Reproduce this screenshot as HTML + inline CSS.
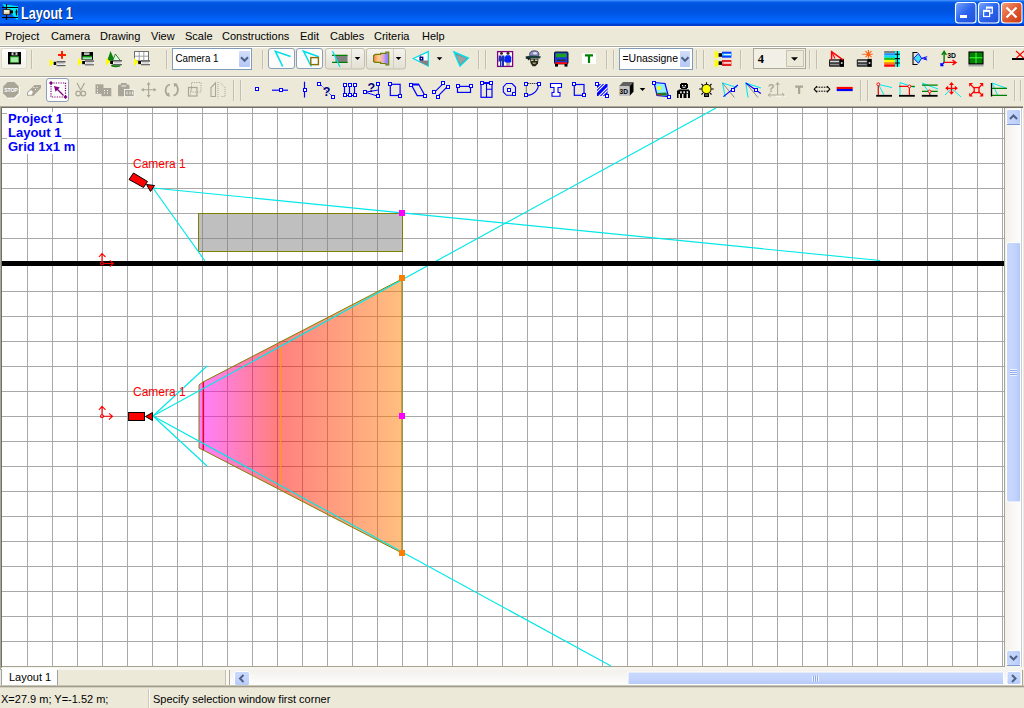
<!DOCTYPE html>
<html><head><meta charset="utf-8">
<style>
*{margin:0;padding:0;box-sizing:border-box}
html,body{width:1024px;height:708px;overflow:hidden}
body{position:relative;background:#ece9d8;font-family:"Liberation Sans",sans-serif;font-size:11px;color:#000}
.a{position:absolute}
svg{position:absolute;overflow:visible}
#title{left:0;top:0;width:1024px;height:26px;background:linear-gradient(to bottom,#4a96ff 0px,#2a7cf8 1px,#0a5fe6 2px,#0058e4 3px,#0052dc 8px,#0054e2 12px,#0060f4 18px,#0066ff 21px,#0062f8 23px,#0044d8 24px,#0033c4 26px)}
#ttext{left:21px;top:4px;font-size:15px;font-weight:bold;color:#fff;white-space:nowrap;text-shadow:1px 1px 0 #0a246a;transform:scale(0.84,1.04);transform-origin:0 0}
.menu{top:30px;font-size:11px;white-space:nowrap}
</style></head>
<body>
<div id="title" class="a"></div>
<div id="ttext" class="a">Layout 1</div>
<svg class="a" style="left:0;top:0" width="1024" height="26" viewBox="0 0 1024 26">
<defs>
<linearGradient id="tbb" x1="0" y1="0" x2="1" y2="1"><stop offset="0" stop-color="#7aa8ff"/><stop offset="0.5" stop-color="#2a64ee"/><stop offset="1" stop-color="#1f4fd8"/></linearGradient>
<linearGradient id="tbc" x1="0" y1="0" x2="1" y2="1"><stop offset="0" stop-color="#f4a080"/><stop offset="0.5" stop-color="#e05a30"/><stop offset="1" stop-color="#c83c18"/></linearGradient>
</defs>
<rect x="955.5" y="2.5" width="20.5" height="20.5" rx="3" fill="url(#tbb)" stroke="#fff" stroke-width="1.1"/>
<rect x="978.5" y="2.5" width="20.5" height="20.5" rx="3" fill="url(#tbb)" stroke="#fff" stroke-width="1.1"/>
<rect x="1001.5" y="2.5" width="20.5" height="20.5" rx="3" fill="url(#tbc)" stroke="#fff" stroke-width="1.1"/>
<rect x="960" y="15" width="7" height="3" fill="#fff"/>
<path d="M986.5 9.5V7.7H992.3V13.2H990" stroke="#fff" stroke-width="1.2" fill="none"/><path d="M986 7.5H992.8" stroke="#fff" stroke-width="2"/>
<rect x="983.6" y="11" width="6" height="5.5" fill="none" stroke="#fff" stroke-width="1.2"/><path d="M983 10.8H990.2" stroke="#fff" stroke-width="2"/>
<path d="M1006.5 7.5L1016.5 17.5M1016.5 7.5L1006.5 17.5" stroke="#fff" stroke-width="2.2"/>
<!-- app icon -->
<polygon points="2.5,4 18,6.2 18,19.5 16.5,19.5 11,13 4.5,7" fill="#00e8f0"/>
<path d="M2 7.5H18M2 17.5H18M6.5 4V20" stroke="#000" stroke-width="1.1"/>
<rect x="3.2" y="9.6" width="6.8" height="4.8" fill="#e8d8b0" stroke="#302010" stroke-width="0.9"/><rect x="4" y="10.6" width="5.2" height="1" fill="#fff"/>
<rect x="10" y="10.3" width="3" height="3.2" fill="#000"/><path d="M16.5 9.5V15.5M15.3 12H17.7" stroke="#000" stroke-width="1.2"/>
</svg>
<div class="a menu" style="left:5px">Project</div>
<div class="a menu" style="left:51px">Camera</div>
<div class="a menu" style="left:100px">Drawing</div>
<div class="a menu" style="left:151px">View</div>
<div class="a menu" style="left:185px">Scale</div>
<div class="a menu" style="left:222px">Constructions</div>
<div class="a menu" style="left:300px">Edit</div>
<div class="a menu" style="left:330px">Cables</div>
<div class="a menu" style="left:374px">Criteria</div>
<div class="a menu" style="left:422px">Help</div>
<div class="a" style="left:0;top:26px;width:1024px;height:1px;background:#fcf0e2"></div>
<div class="a" style="left:0;top:28px;width:1024px;height:1px;background:#f2eae2"></div>
<div class="a" style="left:0;top:45px;width:1024px;height:1px;background:#f8f7f0"></div>
<div class="a" style="left:0;top:46px;width:1024px;height:1px;background:#aca899"></div>
<div class="a" style="left:0;top:47px;width:1024px;height:1px;background:#fff"></div>
<div class="a" style="left:0;top:76px;width:1024px;height:1px;background:#aca899"></div>
<div class="a" style="left:0;top:77px;width:1024px;height:1px;background:#fff"></div>
<svg class="a" style="left:0;top:46px" width="1024" height="60" viewBox="0 46 1024 60">
<path d="M31.5 50V69" stroke="#c2bfb0" shape-rendering="crispEdges"/>
<path d="M32.5 50V69" stroke="#f2f0e6" shape-rendering="crispEdges"/>
<path d="M166.5 50V69" stroke="#c2bfb0" shape-rendering="crispEdges"/>
<path d="M167.5 50V69" stroke="#f2f0e6" shape-rendering="crispEdges"/>
<path d="M262.5 50V69" stroke="#c2bfb0" shape-rendering="crispEdges"/>
<path d="M263.5 50V69" stroke="#f2f0e6" shape-rendering="crispEdges"/>
<path d="M478.5 50V69" stroke="#c2bfb0" shape-rendering="crispEdges"/>
<path d="M479.5 50V69" stroke="#f2f0e6" shape-rendering="crispEdges"/>
<path d="M485.5 50V69" stroke="#c2bfb0" shape-rendering="crispEdges"/>
<path d="M486.5 50V69" stroke="#f2f0e6" shape-rendering="crispEdges"/>
<path d="M606.5 50V69" stroke="#c2bfb0" shape-rendering="crispEdges"/>
<path d="M607.5 50V69" stroke="#f2f0e6" shape-rendering="crispEdges"/>
<path d="M613.5 50V69" stroke="#c2bfb0" shape-rendering="crispEdges"/>
<path d="M614.5 50V69" stroke="#f2f0e6" shape-rendering="crispEdges"/>
<path d="M696.5 50V69" stroke="#c2bfb0" shape-rendering="crispEdges"/>
<path d="M697.5 50V69" stroke="#f2f0e6" shape-rendering="crispEdges"/>
<path d="M703.5 50V69" stroke="#c2bfb0" shape-rendering="crispEdges"/>
<path d="M704.5 50V69" stroke="#f2f0e6" shape-rendering="crispEdges"/>
<path d="M740.5 50V69" stroke="#c2bfb0" shape-rendering="crispEdges"/>
<path d="M741.5 50V69" stroke="#f2f0e6" shape-rendering="crispEdges"/>
<path d="M809.5 50V69" stroke="#c2bfb0" shape-rendering="crispEdges"/>
<path d="M810.5 50V69" stroke="#f2f0e6" shape-rendering="crispEdges"/>
<path d="M816.5 50V69" stroke="#c2bfb0" shape-rendering="crispEdges"/>
<path d="M817.5 50V69" stroke="#f2f0e6" shape-rendering="crispEdges"/>
<path d="M993.5 50V69" stroke="#c2bfb0" shape-rendering="crispEdges"/>
<path d="M994.5 50V69" stroke="#f2f0e6" shape-rendering="crispEdges"/>
<path d="M233.5 80V101" stroke="#c2bfb0" shape-rendering="crispEdges"/>
<path d="M234.5 80V101" stroke="#f2f0e6" shape-rendering="crispEdges"/>
<path d="M240.5 80V101" stroke="#c2bfb0" shape-rendering="crispEdges"/>
<path d="M241.5 80V101" stroke="#f2f0e6" shape-rendering="crispEdges"/>
<path d="M860.5 80V101" stroke="#c2bfb0" shape-rendering="crispEdges"/>
<path d="M861.5 80V101" stroke="#f2f0e6" shape-rendering="crispEdges"/>
<path d="M867.5 80V101" stroke="#c2bfb0" shape-rendering="crispEdges"/>
<path d="M868.5 80V101" stroke="#f2f0e6" shape-rendering="crispEdges"/>
<path d="M1014.5 80V101" stroke="#c2bfb0" shape-rendering="crispEdges"/>
<path d="M1015.5 80V101" stroke="#f2f0e6" shape-rendering="crispEdges"/>
<path d="M1020.5 80V101" stroke="#c2bfb0" shape-rendering="crispEdges"/>
<path d="M1021.5 80V101" stroke="#f2f0e6" shape-rendering="crispEdges"/>
<defs><linearGradient id="rb" x1="0" y1="0" x2="0" y2="1"><stop offset="0" stop-color="#ffffff"/><stop offset="1" stop-color="#f3f2ec"/></linearGradient><linearGradient id="spl" x1="0" y1="0" x2="0" y2="1"><stop offset="0" stop-color="#f4f3ee"/><stop offset="1" stop-color="#e3e0d3"/></linearGradient><linearGradient id="cone2" x1="0" y1="0" x2="1" y2="0"><stop offset="0" stop-color="#ff8060"/><stop offset="0.35" stop-color="#ffd080"/><stop offset="0.65" stop-color="#e0a8d8"/><stop offset="0.85" stop-color="#9888ff"/><stop offset="1" stop-color="#9080ff"/></linearGradient></defs>
<rect x="1.5" y="48.5" width="25" height="20" rx="2" fill="url(#rb)" stroke="#dedbcc"/>
<rect x="268.5" y="48.5" width="26" height="20" rx="2.5" fill="#fcfcfa" stroke="#8d9fb8"/>
<rect x="296.5" y="48.5" width="26" height="20" rx="2.5" fill="#fcfcfa" stroke="#8d9fb8"/>
<rect x="46.5" y="78.5" width="22" height="23" rx="2.5" fill="#fcfcfa" stroke="#8d9fb8"/>
<rect x="325.5" y="48.5" width="39" height="20.5" rx="2.5" fill="url(#spl)" stroke="#c2bfae"/>
<path d="M351.5 49V69" stroke="#d0cdbd" shape-rendering="crispEdges"/>
<rect x="366.5" y="48.5" width="39" height="20.5" rx="2.5" fill="url(#spl)" stroke="#c2bfae"/>
<path d="M393.5 49V69" stroke="#d0cdbd" shape-rendering="crispEdges"/>
<polygon points="354.7,57 360.3,57 357.5,60" fill="#000"/>
<polygon points="395.7,57 401.3,57 398.5,60" fill="#000"/>
<polygon points="436.7,57.2 442.3,57.2 439.5,60.2" fill="#000"/>
<polygon points="639.7,88 645.3,88 642.5,91" fill="#000"/>
<rect x="172.5" y="48.5" width="79" height="21" fill="#fff" stroke="#7f9db9"/>
<defs><linearGradient id="cb172" x1="0" y1="0" x2="0" y2="1"><stop offset="0" stop-color="#d2def9"/><stop offset="1" stop-color="#b4c8f6"/></linearGradient></defs>
<rect x="239" y="51" width="11" height="16" rx="1" fill="url(#cb172)"/>
<path d="M241.0 57.2L244.5 60.8L248.0 57.2" stroke="#4d6185" stroke-width="2" fill="none"/>
<text x="175.5" y="61.5" font-family="Liberation Sans" font-size="11" fill="#000" textLength="43" lengthAdjust="spacingAndGlyphs">Camera 1</text>
<rect x="619.5" y="48.5" width="73" height="21" fill="#fff" stroke="#7f9db9"/>
<defs><linearGradient id="cb619" x1="0" y1="0" x2="0" y2="1"><stop offset="0" stop-color="#d2def9"/><stop offset="1" stop-color="#b4c8f6"/></linearGradient></defs>
<rect x="680" y="51" width="10" height="16" rx="1" fill="url(#cb619)"/>
<path d="M681.5 57.2L685.0 60.8L688.5 57.2" stroke="#4d6185" stroke-width="2" fill="none"/>
<text x="622.5" y="61.8" font-family="Liberation Sans" font-size="11" fill="#000" textLength="55.5" lengthAdjust="spacingAndGlyphs">=Unassigne</text>
<rect x="753.5" y="48.5" width="52" height="20" fill="#f2f0e6" stroke="#aca899"/>
<rect x="786.5" y="50.5" width="17" height="16" fill="#ece9d8" stroke="#c6c3b3"/>
<polygon points="791,57.2 798,57.2 794.5,60.8" fill="#000"/>
<text x="757.8" y="62.8" font-family="Liberation Serif" font-weight="bold" font-size="12.5" fill="#000">4</text>
<rect x="8" y="52" width="13" height="12.3" fill="#000"/>
<rect x="11.5" y="52.3" width="6" height="3" fill="#c8c8c8"/>
<rect x="13.5" y="52.6" width="2" height="2.2" fill="#000"/>
<rect x="10" y="56.3" width="9" height="6.5" fill="#22aa22"/>
<rect x="10.8" y="57.3" width="7.4" height="4.8" fill="#a8e8a8"/>
<polygon points="49.5,58.8 53.8,62.8 49.5,66.8" fill="#ffff00"/>
<rect x="53.7" y="61.8" width="2.8" height="3.2" fill="#000"/>
<rect x="56.5" y="61.199999999999996" width="9" height="5" fill="#f4f4f4"/>
<rect x="56.5" y="61.199999999999996" width="9" height="1.3" fill="#404040"/>
<rect x="56.5" y="65.0" width="9" height="1.2" fill="#606060"/>
<rect x="57.5" y="63.4" width="7" height="0.8" fill="#b0b0b0"/>
<path d="M58 55.1H66M62 51V58.7" stroke="#ff2000" stroke-width="2"/>
<rect x="81.5" y="52" width="11.5" height="7.8" fill="#000"/>
<rect x="84" y="52.4" width="5.5" height="2.6" fill="#b8b8b8"/>
<rect x="82.5" y="55.8" width="9.5" height="1.4" fill="#00a000"/>
<rect x="82.5" y="57.2" width="9.5" height="2.2" fill="#a0e8b0"/>
<polygon points="78,58 82.3,62 78,66" fill="#ffff00"/>
<rect x="82.2" y="61" width="2.8" height="3.2" fill="#000"/>
<rect x="85" y="60.4" width="9" height="5" fill="#f4f4f4"/>
<rect x="85" y="60.4" width="9" height="1.3" fill="#404040"/>
<rect x="85" y="64.2" width="9" height="1.2" fill="#606060"/>
<rect x="86" y="62.6" width="7" height="0.8" fill="#b0b0b0"/>
<polygon points="110.5,51 114.8,60.7 107.2,60.7" fill="#108010"/>
<polygon points="115.4,54 120.6,61 112.5,61" fill="#e8ffe8" stroke="#108010" stroke-width="0.9"/>
<ellipse cx="115.8" cy="65.6" rx="4.8" ry="1.6" fill="#108010"/>
<polygon points="106,57.8 110.3,61.8 106,65.8" fill="#ffff00"/>
<rect x="110.2" y="60.8" width="2.8" height="3.2" fill="#000"/>
<rect x="113" y="60.199999999999996" width="9" height="5" fill="#f4f4f4"/>
<rect x="113" y="60.199999999999996" width="9" height="1.3" fill="#404040"/>
<rect x="113" y="64.0" width="9" height="1.2" fill="#606060"/>
<rect x="114" y="62.4" width="7" height="0.8" fill="#b0b0b0"/>
<rect x="134.5" y="51.5" width="14" height="9.5" fill="#fff" stroke="#707070"/>
<path d="M139.2 52V61M143.8 52V61M135 56.2H148" stroke="#a0a0a0"/>
<polygon points="134,57.9 138.3,61.9 134,65.9" fill="#ffff00"/>
<rect x="138.2" y="60.9" width="2.8" height="3.2" fill="#000"/>
<rect x="141" y="60.3" width="9" height="5" fill="#f4f4f4"/>
<rect x="141" y="60.3" width="9" height="1.3" fill="#404040"/>
<rect x="141" y="64.1" width="9" height="1.2" fill="#606060"/>
<rect x="142" y="62.5" width="7" height="0.8" fill="#b0b0b0"/>
<path d="M290.6 56.5L275.4 51.3L282.7 66.5" stroke="#00e0e8" stroke-width="1.6" fill="none"/>
<path d="M318.7 56.8L303.5 51.3L311.4 66.5" stroke="#00e0e8" stroke-width="1.6" fill="none"/>
<rect x="310.8" y="57.6" width="7.6" height="7" fill="none" stroke="#8a7000" stroke-width="1.4"/>
<rect x="335.5" y="56" width="12" height="6.4" fill="#808080"/>
<path d="M332 55.4H347.6M332 62.4H347.6" stroke="#008000" stroke-width="1.2"/>
<path d="M332.5 51L340 67" stroke="#00e0e8" stroke-width="1.2"/>
<polygon points="373.6,55.4 375.3,54.4 380.6,54.4 380.6,53.3 385.9,53.3 385.9,52.2 388.7,52.2 388.7,64.8 385.9,64.8 385.9,63.5 380.6,63.5 380.6,62.4 375.2,62.4 373.6,61.6" fill="url(#cone2)" stroke="#708000" stroke-width="1.2"/>
<polygon points="413.3,58.5 428.3,51.6 428.3,66" fill="#fff" stroke="#00e0e8" stroke-width="1.3"/>
<polygon points="420,60.6 428,60.6 428,65.7 420,62.2" fill="#808080"/>
<path d="M420.5 54.5V62" stroke="#909090"/>
<rect x="419.4" y="56.6" width="4" height="4" fill="#00008a"/><rect x="420.8" y="58" width="1.2" height="1.2" fill="#fff"/>
<polygon points="454,52 468.3,58 460,66" fill="#8a8a8a" stroke="#00e0e8" stroke-width="1.4"/>
<polygon points="456.5,55 466,58.5 460,64" fill="#a0a0a0"/>
<rect x="497.6" y="51.6" width="15" height="14.8" fill="#fff" stroke="#800080" stroke-width="1.3"/>
<ellipse cx="501.5" cy="53.4" rx="1.5" ry="1.3" fill="#402020"/><path d="M498.8 55.5h5.6l0.6 6h-1v5h-4v-5h-1.6z" fill="#1a30b0"/><path d="M501 55.5l0.5 2l0.5-2z" fill="#e0e0ff"/><rect x="501.3" y="61" width="0.6" height="5" fill="#fff"/>
<ellipse cx="508" cy="53.4" rx="1.5" ry="1.3" fill="#302020"/><path d="M506 55.2h4l1.2 2v4l-1 1.5h-4.4l-1-1.5v-4z" fill="#0020ff"/><rect x="506.6" y="62.5" width="1" height="3.5" fill="#806050"/><rect x="508.5" y="62.5" width="1" height="3.5" fill="#806050"/>
<ellipse cx="534.3" cy="54.2" rx="4.6" ry="3.4" fill="#8c8cc8" stroke="#303040" stroke-width="0.8"/><ellipse cx="535" cy="53.2" rx="2" ry="1.3" fill="#e0e0f0"/>
<path d="M525.5 56.5Q533 54.5 541 56.5L540 58.5Q533 57.5 526 59Z" fill="#1c4040"/><path d="M526 56.8L528.5 60.5L531 58.2Z" fill="#102020"/>
<path d="M530 58.5H538.5L538 63.5L535.5 66.3H532.5L530.5 63Z" fill="#2a2a18"/><path d="M531 59.5h2.5v1.5h-2.5zM535 59.5h2.5v1.5h-2.5z" fill="#c8c8b8"/><path d="M532.5 62.5h3.5l-0.5 1.5h-2.5z" fill="#a0a080"/>
<rect x="554.5" y="52" width="13.5" height="11.8" rx="1" fill="#1a3ce0" stroke="#000" stroke-width="0.9"/>
<rect x="556" y="53.5" width="10.5" height="3.8" fill="#20a020"/><rect x="557" y="59.5" width="8.5" height="1.6" fill="#303030"/>
<rect x="555.5" y="62.2" width="11.5" height="2" fill="#ff0000"/><rect x="555" y="64" width="3" height="2.6" fill="#000"/><rect x="564.5" y="64" width="3" height="2.6" fill="#000"/>
<rect x="582" y="53.4" width="14" height="10.6" fill="#fff"/>
<path d="M585 55.4H593M589 55.4V63" stroke="#008000" stroke-width="2.2"/>
<path d="M714.6 51A4 3.6 0 0 1 714.6 58.3ZM714.6 59.5A4 3.6 0 0 1 714.6 67.2Z" fill="#ffff00"/>
<rect x="718.6" y="53.2" width="3.6" height="3.6" fill="#000"/><rect x="718.6" y="61.3" width="3.6" height="3.6" fill="#000"/>
<rect x="722" y="51.7" width="9.4" height="6" fill="#1040ff"/><rect x="722.2" y="53.6" width="9" height="2" fill="#40e0ff"/><rect x="724" y="54.2" width="7" height="0.9" fill="#fff"/>
<rect x="722" y="60" width="9.4" height="6" fill="#e02020"/><rect x="722.2" y="61.9" width="9" height="2" fill="#ff9090"/><rect x="724" y="62.5" width="7" height="0.9" fill="#fff"/>
<rect x="829" y="59.3" width="10.6" height="7.4" rx="1" fill="#202020"/>
<rect x="830" y="60.699999999999996" width="9" height="1.6" fill="#d8d8d8"/>
<rect x="830" y="63.699999999999996" width="9" height="1.6" fill="#909090"/>
<rect x="839.4" y="58.9" width="4.6" height="8" fill="#000"/>
<circle cx="841.7" cy="62.9" r="1" fill="#d0d0d0"/>
<path d="M831.6 60V51.6L843 59.8" stroke="#ff0000" stroke-width="1.5" fill="none"/><path d="M831.6 51.8L835 58.5" stroke="#ff0000" stroke-width="1.1"/>
<rect x="856.8" y="59.3" width="10.6" height="7.4" rx="1" fill="#202020"/>
<rect x="857.8" y="60.699999999999996" width="9" height="1.6" fill="#d8d8d8"/>
<rect x="857.8" y="63.699999999999996" width="9" height="1.6" fill="#909090"/>
<rect x="867.1999999999999" y="58.9" width="4.6" height="8" fill="#000"/>
<circle cx="869.5" cy="62.9" r="1" fill="#d0d0d0"/>
<g stroke="#ff6010" stroke-width="1.1"><path d="M868.5 50V58.5M864.3 54.2H872.7M865.5 51.2L871.5 57.2M871.5 51.2L865.5 57.2"/><path d="M862 54.4H864.5" stroke-width="0.8"/></g>
<rect x="884.2" y="51.00" width="11" height="2.3" fill="#808080"/>
<rect x="884.2" y="53.24" width="11" height="2.3" fill="#2090ff"/>
<rect x="884.2" y="55.48" width="11" height="2.3" fill="#00e0ff"/>
<rect x="884.2" y="57.72" width="11" height="2.3" fill="#20c020"/>
<rect x="884.2" y="59.96" width="11" height="2.3" fill="#ffff00"/>
<rect x="884.2" y="62.20" width="11" height="2.3" fill="#ff8000"/>
<rect x="884.2" y="64.44" width="11" height="2.3" fill="#ff0000"/>
<rect x="895" y="51" width="4.8" height="15.7" fill="#00ffff"/>
<path d="M897.4 51V66.7M895 54.2H899.8M895 58.6H899.8M895 63H899.8" stroke="#000" stroke-width="1.1"/>
<path d="M917.5 52.5H913V64.5H917.5" stroke="#000" stroke-width="1.1" fill="none"/>
<polygon points="913.7,58.3 918.4,53.4 921.6,58.3 918.4,63.3" fill="#40e0f0" stroke="#0000ff" stroke-width="0.9"/>
<path d="M921.6 58.3L927.2 56.6M921.6 58.3L927.2 60M924 57.6L926.5 58.3L924 59" stroke="#0000ff" stroke-width="0.9" fill="none"/>
<path d="M944.1 62.4V52.5M941.8 55L944.1 51.3L946.4 55" stroke="#008000" stroke-width="1.4" fill="none"/>
<path d="M944.1 62.4H955.5M952.5 60L956 62.4L952.5 64.8" stroke="#ff0000" stroke-width="1.4" fill="none"/>
<path d="M944.1 62.4L941 65.5M941 63V65.5H943.5" stroke="#0000ff" stroke-width="1.4" fill="none"/>
<text x="947.3" y="57.8" font-family="Liberation Sans" font-weight="bold" font-size="6.8" fill="#000">3D</text>
<rect x="968.5" y="64" width="15" height="2.4" fill="#a8a8a8"/>
<rect x="969" y="52" width="14" height="11.8" fill="#008000" stroke="#000" stroke-width="1.1"/>
<path d="M969.5 57.8H982.5M976 52.5V63.3" stroke="#40ff40" stroke-width="1"/>
<path d="M1012 59H1024" stroke="#000" stroke-width="2"/><path d="M1016 51L1023.5 58M1024 51L1016.5 58" stroke="#ff0000" stroke-width="1.1"/>
<polygon points="7.6,82 14.3,82 18.8,86.5 18.8,93.3 14.3,97.8 7.6,97.8 3.1,93.3 3.1,86.5" fill="#a9a697"/>
<polygon points="19,87 19.8,87 19.8,93.8 15,98.6 7.8,98.6 7.8,97.8 14.3,97.8 18.8,93.3" fill="#fff"/>
<text x="4.3" y="92.4" font-family="Liberation Sans" font-weight="bold" font-size="5.2" fill="#fff" textLength="13.5">STOP</text>
<polygon points="27,92.5 34.5,85 41,85 41,88 33.5,95.8 27,95.8" fill="#a9a697"/>
<polygon points="28,92.8 31,90 33,92 31.5,94.8 28,94.8" fill="#fff"/><path d="M33.5 87.5h1M36.5 87.5h1M35 89.5h1" stroke="#fff"/>
<rect x="51" y="83" width="14.5" height="14" fill="none" stroke="#800080" stroke-width="1.2" stroke-dasharray="1.2 1.2"/>
<polygon points="51,81 53,83 51,85 49,83" fill="#800080"/>
<polygon points="65.5,95 67.5,97 65.5,99 63.5,97" fill="#800080"/>
<path d="M56 88L63.5 95.5" stroke="#800080" stroke-width="1.3"/><polygon points="54,86 59.8,87.5 55.5,91.8" fill="#800080"/>
<path d="M77 83L81 90.5M84.5 83L80.5 90.5" stroke="#a9a697" stroke-width="1.2"/>
<circle cx="78.2" cy="93.5" r="2.3" fill="none" stroke="#a9a697" stroke-width="1.2"/><circle cx="83.3" cy="93.5" r="2.3" fill="none" stroke="#a9a697" stroke-width="1.2"/>
<rect x="95.5" y="84.3" width="8" height="9.5" fill="#a9a697"/><rect x="101.5" y="88" width="9.8" height="8.2" fill="#a9a697"/>
<path d="M97.5 86.5v1M97.5 89.5v1M97.5 92v1M104 90.5h1M107 90.5h1M104 93h1M107 93h1" stroke="#fff"/>
<rect x="118" y="84.5" width="11.5" height="11.8" rx="1.5" fill="#a9a697"/><rect x="121" y="83" width="5.5" height="2.6" fill="#a9a697"/><rect x="121.5" y="85.5" width="4.5" height="0.9" fill="#fff"/>
<rect x="124.5" y="89.5" width="9.6" height="7.2" fill="#a9a697" stroke="#fff" stroke-width="0.8"/>
<path d="M127 91.5v3M130 91.5v3M132.5 91.5v3" stroke="#fff" stroke-width="0.8"/>
<path d="M148.6 82.5V97.3M141.5 89.8H156" stroke="#a9a697" stroke-width="1.1"/>
<polygon points="148.6,82.2 146.6,84.8 150.6,84.8" fill="#a9a697"/><polygon points="148.6,97.5 146.6,95 150.6,95" fill="#a9a697"/><polygon points="141.2,89.8 143.8,87.8 143.8,91.8" fill="#a9a697"/><polygon points="156.3,89.8 153.7,87.8 153.7,91.8" fill="#a9a697"/>
<path d="M170 84.5A5.8 6 0 0 0 168.5 95.5" stroke="#a9a697" stroke-width="1.8" fill="none"/><polygon points="165.5,95 170,97 169,92.5" fill="#a9a697"/>
<path d="M173.5 95.5A5.8 6 0 0 0 175 84.5" stroke="#a9a697" stroke-width="1.8" fill="none"/><polygon points="178,84 173.8,83 174,87" fill="#a9a697"/>
<rect x="191.5" y="82.5" width="9.5" height="9.5" fill="none" stroke="#a9a697" stroke-dasharray="1.2 1.2"/>
<rect x="188.5" y="87.5" width="8.5" height="8.5" fill="none" stroke="#a9a697" stroke-width="1.2"/><path d="M190.5 89.5v5" stroke="#a9a697" stroke-dasharray="1 1"/>
<path d="M211 96.5V87.5L215.5 82.8V96.5Z" fill="none" stroke="#a9a697" stroke-width="1.1"/>
<path d="M218 82V98.5" stroke="#a9a697" stroke-dasharray="1 1"/><path d="M220.5 82.8L225 87.5V96.5H220.5" fill="none" stroke="#a9a697" stroke-dasharray="1 1"/>
<rect x="255.5" y="87.5" width="3" height="3" fill="#fff" stroke="#0000ff" stroke-width="1" shape-rendering="crispEdges"/>
<path d="M272 90.2H288" stroke="#0000ff" stroke-width="1.2"/>
<rect x="279.5" y="88.5" width="3" height="3" fill="#fff" stroke="#0000ff" stroke-width="1" shape-rendering="crispEdges"/>
<path d="M304.5 81.7V97.5" stroke="#0000ff" stroke-width="1.2"/>
<rect x="303.5" y="88.5" width="3" height="3" fill="#fff" stroke="#0000ff" stroke-width="1" shape-rendering="crispEdges"/>
<path d="M319.4 83.5L332.6 96.6" stroke="#0000ff" stroke-dasharray="1.2 1"/>
<rect x="317.5" y="82.5" width="3" height="3" fill="#fff" stroke="#0000ff" stroke-width="1" shape-rendering="crispEdges"/>
<rect x="331.5" y="95.5" width="3" height="3" fill="#fff" stroke="#0000ff" stroke-width="1" shape-rendering="crispEdges"/>
<text x="322.8" y="95.8" font-family="Liberation Sans" font-weight="bold" font-size="12.5" fill="#000080">?</text>
<path d="M344.5 84.5V95.5M349.5 84.5V95.5M354.5 84.5V95.5M344.5 95.5H354.5" stroke="#0000ff" stroke-width="1.2" fill="none"/>
<rect x="343.5" y="83.5" width="3" height="3" fill="#fff" stroke="#0000ff" stroke-width="1" shape-rendering="crispEdges"/>
<rect x="343.5" y="93.5" width="3" height="3" fill="#fff" stroke="#0000ff" stroke-width="1" shape-rendering="crispEdges"/>
<rect x="348.5" y="83.5" width="3" height="3" fill="#fff" stroke="#0000ff" stroke-width="1" shape-rendering="crispEdges"/>
<rect x="348.5" y="93.5" width="3" height="3" fill="#fff" stroke="#0000ff" stroke-width="1" shape-rendering="crispEdges"/>
<rect x="353.5" y="83.5" width="3" height="3" fill="#fff" stroke="#0000ff" stroke-width="1" shape-rendering="crispEdges"/>
<rect x="353.5" y="93.5" width="3" height="3" fill="#fff" stroke="#0000ff" stroke-width="1" shape-rendering="crispEdges"/>
<path d="M378.4 84V96.4L365.2 92.2L378.4 90" stroke="#0000ff" stroke-width="1" fill="none"/>
<rect x="376.5" y="82.5" width="3" height="3" fill="#fff" stroke="#0000ff" stroke-width="1" shape-rendering="crispEdges"/>
<rect x="376.5" y="94.5" width="3" height="3" fill="#fff" stroke="#0000ff" stroke-width="1" shape-rendering="crispEdges"/>
<rect x="363.5" y="90.5" width="3" height="3" fill="#fff" stroke="#0000ff" stroke-width="1" shape-rendering="crispEdges"/>
<text x="367.6" y="91.8" font-family="Liberation Sans" font-weight="bold" font-size="12.5" fill="#000080">?</text>
<rect x="390.3" y="84.3" width="9.8" height="11.2" fill="none" stroke="#0000ff" stroke-width="1.2"/>
<rect x="388.5" y="82.5" width="3" height="3" fill="#fff" stroke="#0000ff" stroke-width="1" shape-rendering="crispEdges"/>
<rect x="398.5" y="94.5" width="3" height="3" fill="#fff" stroke="#0000ff" stroke-width="1" shape-rendering="crispEdges"/>
<polygon points="411.2,84.5 418.8,84.5 425,95.6 417.2,95.6" fill="none" stroke="#0000ff" stroke-width="1.2"/><path d="M412 84.5H419" stroke="#0000ff" stroke-width="2"/>
<rect x="409.5" y="83.5" width="3" height="3" fill="#fff" stroke="#0000ff" stroke-width="1" shape-rendering="crispEdges"/>
<rect x="423.5" y="94.5" width="3" height="3" fill="#fff" stroke="#0000ff" stroke-width="1" shape-rendering="crispEdges"/>
<path d="M443.4 83.4L434.3 92.3M447.5 86.5L437.5 96.6" stroke="#0000ff" stroke-width="1.1"/>
<rect x="441.5" y="81.5" width="3" height="3" fill="#fff" stroke="#0000ff" stroke-width="1" shape-rendering="crispEdges"/>
<rect x="446.5" y="85.5" width="3" height="3" fill="#fff" stroke="#0000ff" stroke-width="1" shape-rendering="crispEdges"/>
<rect x="432.5" y="90.5" width="3" height="3" fill="#fff" stroke="#0000ff" stroke-width="1" shape-rendering="crispEdges"/>
<rect x="436.5" y="95.5" width="3" height="3" fill="#fff" stroke="#0000ff" stroke-width="1" shape-rendering="crispEdges"/>
<rect x="457.5" y="86.4" width="13" height="6" fill="none" stroke="#0000ff" stroke-width="1.2"/>
<rect x="456.5" y="84.5" width="3" height="3" fill="#fff" stroke="#0000ff" stroke-width="1" shape-rendering="crispEdges"/>
<rect x="469.5" y="84.5" width="3" height="3" fill="#fff" stroke="#0000ff" stroke-width="1" shape-rendering="crispEdges"/>
<rect x="481" y="83" width="11" height="14.3" fill="none" stroke="#0000ff" stroke-width="1.2"/><path d="M486.5 83V97.3M486.5 89.2H492" stroke="#0000ff" stroke-width="1.1"/><path d="M481 83H492" stroke="#0000ff" stroke-width="2"/>
<rect x="480.5" y="81.5" width="3" height="3" fill="#fff" stroke="#0000ff" stroke-width="1" shape-rendering="crispEdges"/>
<rect x="489.5" y="81.5" width="3" height="3" fill="#fff" stroke="#0000ff" stroke-width="1" shape-rendering="crispEdges"/>
<polygon points="506.5,83.5 512,83.5 515.5,87 515.5,92 512,95.3 506.5,95.3 503.3,92 503.3,87" fill="none" stroke="#0000ff" stroke-width="1.1"/>
<rect x="507.5" y="88.5" width="3" height="3" fill="#fff" stroke="#0000ff" stroke-width="1" shape-rendering="crispEdges"/>
<rect x="512.5" y="92.5" width="3" height="3" fill="#fff" stroke="#0000ff" stroke-width="1" shape-rendering="crispEdges"/>
<path d="M526.3 83.5H538.6M526.3 83.5V95.3" stroke="#000" stroke-dasharray="1 1"/>
<path d="M538.6 84A11.5 11.5 0 0 1 526.8 95.3" stroke="#0000ff" stroke-width="1.1" fill="none"/>
<rect x="524.5" y="82.5" width="3" height="3" fill="#fff" stroke="#0000ff" stroke-width="1" shape-rendering="crispEdges"/>
<rect x="537.5" y="82.5" width="3" height="3" fill="#fff" stroke="#0000ff" stroke-width="1" shape-rendering="crispEdges"/>
<rect x="524.5" y="93.5" width="3" height="3" fill="#fff" stroke="#0000ff" stroke-width="1" shape-rendering="crispEdges"/>
<polygon points="550.5,83.5 561.5,83.5 561.5,87.5 558,87.5 558,92.5 560,92.5 560,96.2 552,96.2 552,92.5 554,92.5 554,87.5 550.5,87.5" fill="#fff" stroke="#0000ff" stroke-width="1.1"/>
<rect x="574.3" y="84.5" width="9.7" height="10.8" fill="none" stroke="#0000ff" stroke-width="1.2"/>
<rect x="572.5" y="82.5" width="3" height="3" fill="#fff" stroke="#0000ff" stroke-width="1" shape-rendering="crispEdges"/>
<rect x="582.5" y="93.5" width="3" height="3" fill="#fff" stroke="#0000ff" stroke-width="1" shape-rendering="crispEdges"/>
<defs><clipPath id="hc"><polygon points="597,84.5 601,84 607.5,84 607.5,94 604,96 597,96"/></clipPath></defs>
<g clip-path="url(#hc)"><rect x="596" y="83" width="12" height="14" fill="#0000ff"/><path d="M596 93L606 83M598 97L608 87M601 97L608 90M596 90L603 83" stroke="#fff" stroke-width="1.1"/></g>
<rect x="595.5" y="82.5" width="3" height="3" fill="#fff" stroke="#0000ff" stroke-width="1" shape-rendering="crispEdges"/>
<rect x="605.5" y="94.5" width="3" height="3" fill="#fff" stroke="#0000ff" stroke-width="1" shape-rendering="crispEdges"/>
<polygon points="619,86.2 623,82 633.5,82 629.5,86.2" fill="#606060"/>
<polygon points="629.5,86.2 633.5,82 633.5,91.8 629.5,96" fill="#000"/>
<rect x="619" y="86.2" width="10.5" height="9.8" fill="#c4c4c4"/>
<text x="619.6" y="93.8" font-family="Liberation Sans" font-weight="bold" font-size="6.6" fill="#000">3D</text>
<polygon points="654,82.5 665,83.5 668.5,96.5 657,95.5" fill="#90f0ff" stroke="#0000ff" stroke-width="1.2"/>
<circle cx="659" cy="88" r="2" fill="#ffff00"/><polygon points="656.2,93 666.5,92.5 667.5,95.8 657,95" fill="#208020"/><polygon points="656.5,94 662,94 662,95.5 657,95.3" fill="#904010"/>
<rect x="652.5" y="81.5" width="3" height="3" fill="#fff" stroke="#0000ff" stroke-width="1" shape-rendering="crispEdges"/>
<rect x="667.5" y="95.5" width="3" height="3" fill="#fff" stroke="#0000ff" stroke-width="1" shape-rendering="crispEdges"/>
<path d="M681 83h6v1h1v4h-1v1h-6v-1h-1v-4h1z" fill="#000"/><rect x="682" y="85" width="1.2" height="1.2" fill="#fff"/><rect x="684.8" y="85" width="1.2" height="1.2" fill="#fff"/><rect x="682.5" y="86.8" width="3" height="0.9" fill="#fff"/>
<path d="M679 89.5h10v1h1v7.5h-2v-4h-1.5v4h-3v-4h-1.5v4h-2v-4h-1.5v4h-1.5v-7.5h1z" fill="#000"/><rect x="680.2" y="91.3" width="1.5" height="2" fill="#fff"/><rect x="683.4" y="91.3" width="1.5" height="2" fill="#fff"/><rect x="686.6" y="91.3" width="1.5" height="2" fill="#fff"/>
<g stroke="#000" stroke-width="1.1"><path d="M706.5 82.2V84.5M699.2 89H701.5M711.5 89H713.7M701.5 84L703 85.5M711.5 84L710 85.5M701.5 94.5L703 93M711.5 94.5L710 93"/></g>
<circle cx="706.5" cy="89" r="4.6" fill="#ffff00" stroke="#000" stroke-width="1"/><rect x="704" y="93.5" width="5" height="3.5" fill="#000"/><rect x="705" y="94.5" width="3" height="1" fill="#a0a0a0"/>
<path d="M737 87.5L722.5 83L725.2 97" stroke="#00e8f0" stroke-width="1.1" fill="none"/><path d="M722.5 83L734.4 97.5" stroke="#808080" stroke-width="0.9"/>
<path d="M723.4 96.6L737.9 85" stroke="#0000ff" stroke-width="1.1"/>
<rect x="731.5" y="88.5" width="3" height="3" fill="#fff" stroke="#0000ff" stroke-width="1" shape-rendering="crispEdges"/>
<path d="M761 88L745.8 83L748 97.5" stroke="#00e8f0" stroke-width="1.1" fill="none"/><path d="M745.8 83L758 97.5" stroke="#808080" stroke-width="0.9"/>
<path d="M745.8 83L760.8 93.5" stroke="#0000ff" stroke-width="1.1"/>
<rect x="754.5" y="88.5" width="3" height="3" fill="#fff" stroke="#0000ff" stroke-width="1" shape-rendering="crispEdges"/>
<text x="767.8" y="91.8" font-family="Liberation Sans" font-weight="bold" font-size="11" fill="#a9a697">?</text>
<path d="M777.6 83V95M775.8 85L777.6 82.5L779.4 85M768.5 95H784M770.5 93L768.2 95L770.5 97M782 93L784.3 95L782 97" stroke="#a9a697" stroke-width="1" fill="none"/>
<path d="M776 96.2H786" stroke="#fff" stroke-width="0.8"/>
<path d="M795.2 86.6H803M799.1 86.6V94" stroke="#a9a697" stroke-width="2.2"/>
<path d="M816 87.2H828M816 91.2H828" stroke="#000" stroke-width="1" stroke-dasharray="1.6 1"/>
<path d="M817 86L814.2 89.2L817 92.4M827 86L829.8 89.2L827 92.4" stroke="#000" stroke-width="1.1" fill="none"/>
<rect x="836.7" y="86.9" width="16" height="2.1" fill="#ff0000"/><rect x="836.7" y="89" width="16" height="2.1" fill="#0000ff"/>
<rect x="876.2" y="94.9" width="15.8" height="1.8" fill="#000"/>
<path d="M878.3 86V95M884 95L878.5 84.5L892 87.5" stroke="#00e8f0" stroke-width="1" fill="none"/><path d="M878.3 86V95" stroke="#ff0000" stroke-width="1.2"/><circle cx="878.3" cy="84.3" r="1.4" fill="#fff" stroke="#ff0000" stroke-width="1"/>
<rect x="899" y="94.9" width="15.8" height="1.8" fill="#000"/>
<path d="M900 95V82.5L914.5 87.5" stroke="#00e8f0" stroke-width="1" fill="none"/><path d="M899 86.4H909M909.4 87.8V95" stroke="#ff0000" stroke-width="1.2"/><path d="M910.8 86.4H914.8" stroke="#008000" stroke-width="1.2"/><circle cx="909.4" cy="86.4" r="1.4" fill="#fff" stroke="#ff0000" stroke-width="1"/>
<rect x="921.8" y="94.9" width="15.8" height="1.8" fill="#000"/>
<path d="M922 83L938 89M923 84L931 95" stroke="#00e8f0" stroke-width="1" fill="none"/><path d="M922 85.2H937.7M922 91.4H937.7" stroke="#008000" stroke-width="1.2"/><path d="M929.6 92.8V95" stroke="#ff0000" stroke-width="1.2"/><circle cx="929.6" cy="91.4" r="1.4" fill="#fff" stroke="#ff0000" stroke-width="1"/>
<path d="M945 95L951.5 88.3L961 97" stroke="#00e8f0" stroke-width="1" fill="none"/>
<path d="M951.5 83V94M946 88.3H957" stroke="#ff0000" stroke-width="1.3"/><polygon points="951.5,82 949,85 954,85" fill="#ff0000"/><polygon points="951.5,94.8 949,91.8 954,91.8" fill="#ff0000"/><polygon points="945.2,88.3 948.2,85.8 948.2,90.8" fill="#ff0000"/><polygon points="957.8,88.3 954.8,85.8 954.8,90.8" fill="#ff0000"/>
<rect x="974.2" y="87.6" width="4.8" height="5" fill="none" stroke="#ff0000" stroke-width="1.3"/>
<path d="M970.5 84.5L974 88M982 84.5L978.5 88M970.5 95L974 91.5M982 95L978.5 91.5" stroke="#ff0000" stroke-width="1.2"/>
<polygon points="969.2,83 973,83 969.2,86.8" fill="#ff0000"/><polygon points="983.2,83 979.4,83 983.2,86.8" fill="#ff0000"/><polygon points="969.2,96.5 973,96.5 969.2,92.7" fill="#ff0000"/><polygon points="983.2,96.5 979.4,96.5 983.2,92.7" fill="#ff0000"/>
<path d="M992 83L1006.5 88.3M992.5 84L998 96" stroke="#00e8f0" stroke-width="1" fill="none"/>
<path d="M991.5 88.3H1007M991.5 95.3H1007" stroke="#008000" stroke-width="1.2"/><path d="M991.5 83V96.5" stroke="#000" stroke-width="1.3"/>
</svg>
<!-- canvas -->
<div class="a" style="left:0;top:106px;width:1023px;height:561px;background:#fff;border-top:1px solid #aca899;border-left:1px solid #aca899"></div>
<div class="a" style="left:1px;top:107px;width:1022px;height:560px;border-top:1px solid #716f64;border-left:1px solid #716f64"></div>
<svg class="a" style="left:0;top:0" width="1024" height="708" viewBox="0 0 1024 708">
<defs>
<linearGradient id="cone" x1="199" y1="0" x2="402" y2="0" gradientUnits="userSpaceOnUse">
<stop offset="0" stop-color="#ff00ff"/><stop offset="0.38" stop-color="#ff0000"/><stop offset="1" stop-color="#ff8000"/>
</linearGradient>
<clipPath id="cv"><rect x="2" y="108" width="1003" height="559"/></clipPath>
</defs>
<g clip-path="url(#cv)">
<path d="M27.5 108V666M52.5 108V666M77.5 108V666M102.5 108V666M127.5 108V666M152.5 108V666M177.5 108V666M202.5 108V666M227.5 108V666M252.5 108V666M277.5 108V666M302.5 108V666M327.5 108V666M352.5 108V666M377.5 108V666M402.5 108V666M427.5 108V666M452.5 108V666M477.5 108V666M502.5 108V666M527.5 108V666M552.5 108V666M577.5 108V666M602.5 108V666M627.5 108V666M652.5 108V666M677.5 108V666M702.5 108V666M727.5 108V666M752.5 108V666M777.5 108V666M802.5 108V666M827.5 108V666M852.5 108V666M877.5 108V666M902.5 108V666M927.5 108V666M952.5 108V666M977.5 108V666M1002.5 108V666M2 113.5H1004M2 138.5H1004M2 163.5H1004M2 188.5H1004M2 213.5H1004M2 238.5H1004M2 263.5H1004M2 291.5H1004M2 316.5H1004M2 341.5H1004M2 366.5H1004M2 391.5H1004M2 416.5H1004M2 441.5H1004M2 466.5H1004M2 491.5H1004M2 516.5H1004M2 541.5H1004M2 566.5H1004M2 591.5H1004M2 616.5H1004M2 641.5H1004" stroke="#a8a8a8" stroke-width="1" fill="none" shape-rendering="crispEdges"/>
<path d="M1004.5 108V667M2 666.5H1005" stroke="#a8a290" fill="none" shape-rendering="crispEdges"/>
<rect x="7" y="112" width="55" height="14" fill="#fff"/>
<rect x="7" y="126" width="55" height="14" fill="#fff"/>
<rect x="7" y="140" width="69" height="14" fill="#fff"/>
<text x="8" y="122.7" font-family="Liberation Sans" font-weight="bold" font-size="13" fill="#0000ff">Project 1</text>
<text x="8" y="136.8" font-family="Liberation Sans" font-weight="bold" font-size="13" fill="#0000ff">Layout 1</text>
<text x="8" y="150.6" font-family="Liberation Sans" font-weight="bold" font-size="13" fill="#0000ff">Grid 1x1 m</text>
<!-- upper gray object -->
<rect x="198.5" y="213.5" width="204" height="38" fill="#808080" fill-opacity="0.5" stroke="#808000" stroke-width="1"/>
<!-- lower cone -->
<polygon points="199,385 203,382 402,279 402,553 203,450 199,448" fill="url(#cone)" fill-opacity="0.5" stroke="#808000" stroke-width="1"/>
<path d="M203.5 382V450" stroke="#ff0000" stroke-width="1.2"/>
<path d="M280.5 346V484" stroke="#ffa000" stroke-width="1"/>
<!-- cyan lines -->
<g stroke="#00e8e8" stroke-width="1.15" fill="none">
<path d="M153 188L880 260.5"/>
<path d="M153 188L205 261"/>
<path d="M153 416L716 108"/>
<path d="M153 416L611 666"/>
<path d="M153 416L207 366"/>
<path d="M153 416L207 466"/>
</g>
<!-- wall -->
<rect x="2" y="261" width="1002" height="5" fill="#000"/>
<!-- handles -->
<rect x="399" y="210" width="6" height="6" fill="#ff00ff"/>
<rect x="399" y="413" width="6" height="6" fill="#ff00ff"/>
<rect x="399" y="275" width="6" height="6" fill="#ff8000"/>
<rect x="399" y="550" width="6" height="6" fill="#ff8000"/>
<!-- camera labels -->
<text x="133" y="167.8" font-family="Liberation Sans" font-size="12" fill="#ff0000">Camera 1</text>
<text x="133" y="395.7" font-family="Liberation Sans" font-size="12" fill="#ff0000">Camera 1</text>
<!-- upper camera -->
<polygon points="133.5,173 129,179.5 143.5,187.5 147.5,181.5" fill="#ff0000" stroke="#000" stroke-width="1"/>
<polygon points="146.5,184.5 154.5,185.5 150.5,191.5" fill="#ff0000" stroke="#000" stroke-width="1"/>
<!-- lower camera -->
<rect x="128.5" y="412.5" width="16" height="8" fill="#ff0000" stroke="#000" stroke-width="1"/>
<polygon points="145.5,416.5 152.5,412.5 152.5,420.5" fill="#ff0000" stroke="#000" stroke-width="1"/>
<!-- axis icons -->
<g stroke="#ff0000" stroke-width="1.1" fill="none">
<path d="M102 262V253.5M99 257L102 253.5L105.5 257M103 263.5H113.3M109.8 260.3L113.3 263.5L109.8 266.7"/>
<circle cx="102" cy="263.5" r="1.5"/>
<path d="M102 415V406.3M99 409.8L102 406.3L105.5 409.8M103 416.3H112.5M109 413.3L112.5 416.3L109 419.5"/>
<circle cx="102" cy="416.3" r="1.5"/>
</g>
</g>
</svg>

<!-- scrollbars -->
<svg class="a" style="left:0;top:0" width="1024" height="708" viewBox="0 0 1024 708">
<defs>
<linearGradient id="trk" x1="0" y1="0" x2="1" y2="0"><stop offset="0" stop-color="#f3f1ec"/><stop offset="1" stop-color="#fefefe"/></linearGradient>
<linearGradient id="trkh" x1="0" y1="0" x2="0" y2="1"><stop offset="0" stop-color="#f3f1ec"/><stop offset="1" stop-color="#fefefe"/></linearGradient>
<linearGradient id="thv" x1="0" y1="0" x2="1" y2="0"><stop offset="0" stop-color="#c9d8fc"/><stop offset="0.5" stop-color="#c4d5fd"/><stop offset="1" stop-color="#b6cafa"/></linearGradient>
<linearGradient id="thh" x1="0" y1="0" x2="0" y2="1"><stop offset="0" stop-color="#c9d8fc"/><stop offset="0.5" stop-color="#c4d5fd"/><stop offset="1" stop-color="#b6cafa"/></linearGradient>
</defs>
<!-- vertical scrollbar -->
<rect x="1005" y="108" width="17" height="559" fill="url(#trk)"/>
<rect x="1006.5" y="109.5" width="14" height="15" rx="2" fill="url(#thv)" stroke="#fff"/>
<path d="M1007 124.5H1020" stroke="#7a9ad0" stroke-width="1"/>
<path d="M1010 119L1013.5 115.5L1017 119" stroke="#4d6185" stroke-width="2" fill="none"/>
<rect x="1006.5" y="242.5" width="14" height="259.5" rx="2" fill="url(#thv)" stroke="#fff"/>
<path d="M1019.5 244V501" stroke="#b0c8f4"/><path d="M1021.5 108V667" stroke="#c4cce0"/>
<path d="M1010 369.5H1017M1010 371.5H1017M1010 373.5H1017M1010 375.5H1017" stroke="#eef3fe" stroke-width="1"/>
<path d="M1010 370.5H1017M1010 372.5H1017M1010 374.5H1017" stroke="#8faaf0" stroke-width="1"/>
<rect x="1006.5" y="650.5" width="14" height="15" rx="2" fill="url(#thv)" stroke="#fff"/>
<path d="M1010 656L1013.5 659.5L1017 656" stroke="#4d6185" stroke-width="2" fill="none"/><path d="M1007 665.5H1020" stroke="#7a9ad0"/>
<!-- tab bar -->
<rect x="0" y="667" width="1024" height="3" fill="#f6f5f0"/><path d="M0.5 667V670M1.5 667V670" stroke="#aca899"/>
<rect x="0" y="670" width="226" height="16" fill="#ece9d8"/>
<rect x="1" y="668" width="57" height="18" fill="#fff"/>
<path d="M1.5 669V686M57.5 670V686" stroke="#a0a0a0" stroke-width="1"/>
<path d="M225.5 670V686" stroke="#c5c2b2"/><path d="M229.5 670V686" stroke="#aca899"/>
<rect x="226" y="670" width="3" height="16" fill="#f8f7f2"/>
<rect x="230" y="670" width="793" height="16" fill="url(#trkh)"/>
<rect x="234.5" y="671.5" width="15" height="14" rx="2" fill="url(#thh)" stroke="#fff"/>
<path d="M243.5 675L240 678.5L243.5 682" stroke="#4d6185" stroke-width="2" fill="none"/>
<rect x="628" y="672" width="375.5" height="12.5" rx="1" fill="url(#thh)" stroke="#fff" stroke-width="1"/>
<path d="M812.5 675.5V681.5M814.5 675.5V681.5M816.5 675.5V681.5M818.5 675.5V681.5" stroke="#eef3fe"/>
<path d="M813.5 675.5V681.5M815.5 675.5V681.5M817.5 675.5V681.5" stroke="#8faaf0"/>
<rect x="1007" y="671.5" width="14" height="13" rx="2" fill="url(#thh)" stroke="#fff"/>
<path d="M1012 675L1015.5 678.5L1012 682" stroke="#4d6185" stroke-width="2" fill="none"/>
<path d="M1022.5 670V686" stroke="#aca899"/>
<rect x="0" y="685" width="1024" height="1" fill="#c8c5b5"/><rect x="0" y="686" width="1024" height="1" fill="#a09d8e"/><rect x="0" y="687" width="1024" height="1" fill="#d4d1c2"/>
<path d="M148.5 689V708" stroke="#cdcabb"/><path d="M149.5 689V708" stroke="#fbfaf5"/>
</svg>
<div class="a" style="left:9px;top:671px;white-space:nowrap">Layout 1</div>
<!-- status -->
<div class="a" style="left:1px;top:693px;white-space:nowrap">X=27.9 m; Y=-1.52 m;</div>
<div class="a" style="left:153px;top:693px;white-space:nowrap">Specify selection window first corner</div>
</body></html>
